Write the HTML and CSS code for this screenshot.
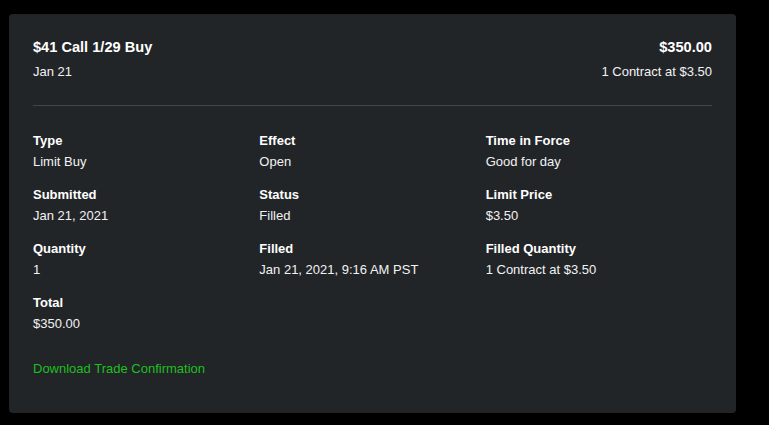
FILE: index.html
```html
<!DOCTYPE html>
<html>
<head>
    <meta charset="UTF-8">
    <title>Order Details</title>
    <link rel="stylesheet" href="styles.css">
</head>
<body>
<div class="card">
    <div class="header">
        <div>
            <div class="title">$41 Call 1/29 Buy</div>
            <div class="sub">Jan 21</div>
        </div>
        <div class="right">
            <div class="title">$350.00</div>
            <div class="sub">1 Contract at $3.50</div>
        </div>
    </div>
    <div class="details">
        <div class="item"><div class="label">Type</div><div class="value">Limit Buy</div></div>
        <div class="item"><div class="label">Effect</div><div class="value">Open</div></div>
        <div class="item"><div class="label">Time in Force</div><div class="value">Good for day</div></div>
        <div class="item"><div class="label">Submitted</div><div class="value">Jan 21, 2021</div></div>
        <div class="item"><div class="label">Status</div><div class="value">Filled</div></div>
        <div class="item"><div class="label">Limit Price</div><div class="value">$3.50</div></div>
        <div class="item"><div class="label">Quantity</div><div class="value">1</div></div>
        <div class="item"><div class="label">Filled</div><div class="value">Jan 21, 2021, 9:16 AM PST</div></div>
        <div class="item"><div class="label">Filled Quantity</div><div class="value">1 Contract at $3.50</div></div>
        <div class="item"><div class="label">Total</div><div class="value">$350.00</div></div>
    </div>
    <a class="download" href="javascript:">Download Trade Confirmation</a>
</div>
</body>
</html>
```

FILE: styles.css
```css
/* page */
html, body {
    margin: 0;
    padding: 0;
    background: #000;
}
body {
    font-family: "Liberation Sans", Arial, sans-serif;
    color: #f2f2f2;
}
/* card */
.card {
    box-sizing: border-box;
    margin: 14px 0 0 9px;
    width: 727px;
    height: 399px;
    padding: 24px;
    background: #222528;
    border-radius: 4px;
}
/* header with divider */
.header {
    display: flex;
    justify-content: space-between;
    padding-bottom: 24px;
    border-bottom: 1px solid #41454a;
}
.header .right {
    text-align: right;
}
.title {
    font-size: 14.6px;
    font-weight: bold;
    line-height: 18px;
    color: #fff;
}
.sub {
    margin-top: 7px;
    font-size: 13px;
    line-height: 18px;
}
/* detail grid */
.details {
    display: grid;
    grid-template-columns: repeat(3, 1fr);
    row-gap: 15px;
    margin-top: 26px;
}
.label {
    font-size: 13px;
    font-weight: bold;
    line-height: 18px;
    color: #fff;
}
.value {
    margin-top: 3px;
    font-size: 13px;
    line-height: 18px;
}
/* link */
.download {
    display: block;
    margin-top: 27px;
    font-size: 13px;
    line-height: 18px;
    color: #1fbf1f;
    text-decoration: none;
}
```
